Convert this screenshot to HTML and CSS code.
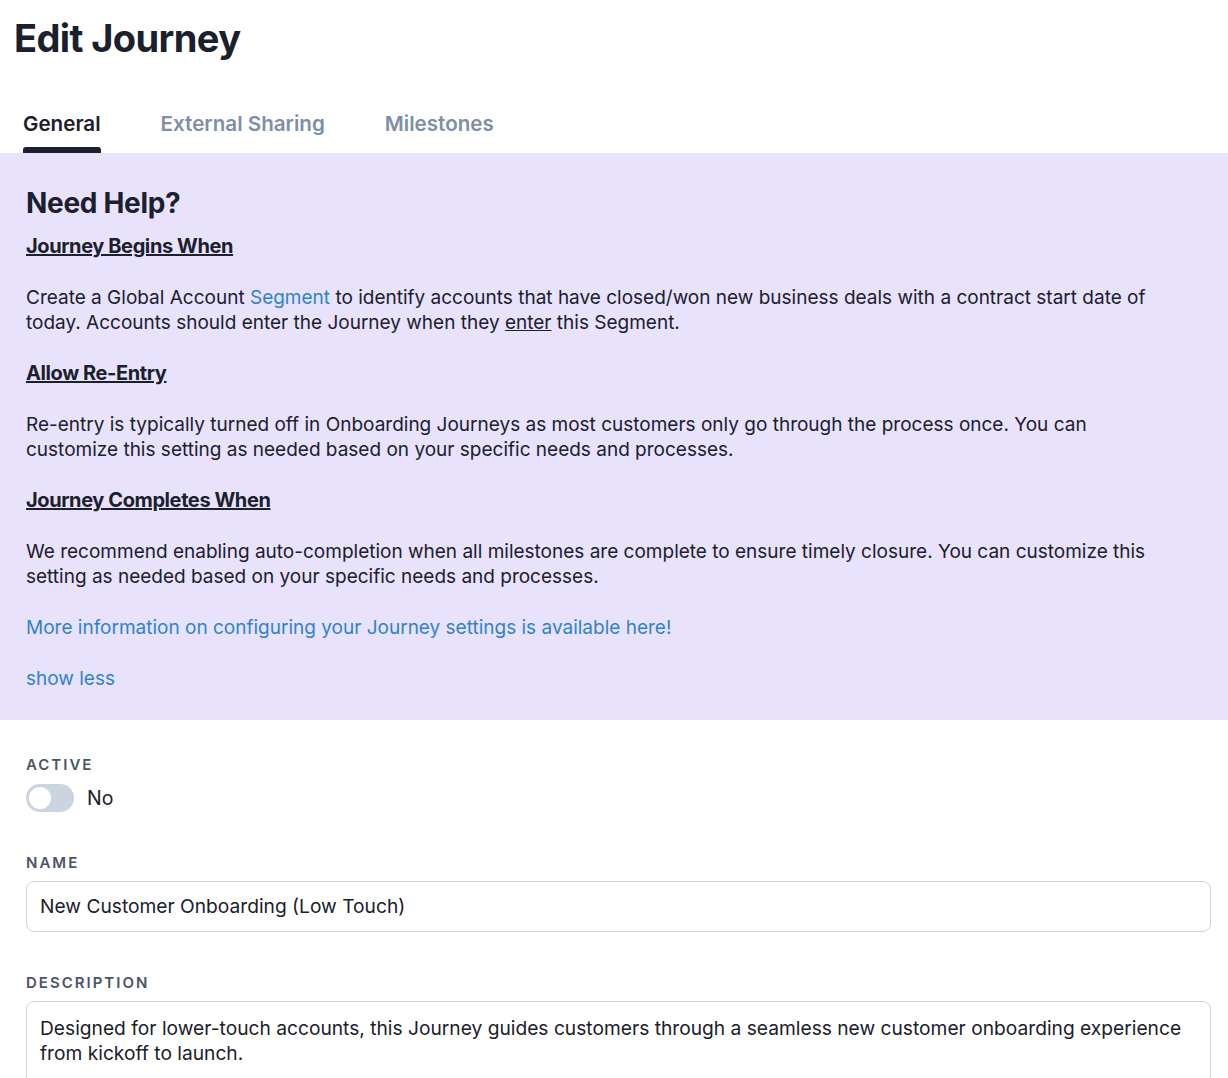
FILE: index.html
```html
<!DOCTYPE html>
<html lang="en">
<head>
    <meta charset="UTF-8">
    <title>Edit Journey</title>
    <link rel="stylesheet" href="styles.css">
</head>
<body>
<h1 class="page-title">Edit Journey</h1>

<ul class="tabs">
    <li class="tab active"><span class="tab-text">General</span><em class="tab-bar"></em></li>
    <li class="tab"><span class="tab-text">External Sharing</span><em class="tab-bar"></em></li>
    <li class="tab"><span class="tab-text">Milestones</span><em class="tab-bar"></em></li>
</ul>

<div class="help">
    <h2 class="help-title">Need Help?</h2>
    <h3 class="help-head">Journey Begins When</h3>
    <p class="help-text">Create a Global Account <a class="link" href="#">Segment</a> to identify accounts that have closed/won new business deals with a contract start date of today. Accounts should enter the Journey when they <u>enter</u> this Segment.</p>
    <h3 class="help-head">Allow Re-Entry</h3>
    <p class="help-text">Re-entry is typically turned off in Onboarding Journeys as most customers only go through the process once. You can customize this setting as needed based on your specific needs and processes.</p>
    <h3 class="help-head">Journey Completes When</h3>
    <p class="help-text">We recommend enabling auto-completion when all milestones are complete to ensure timely closure. You can customize this setting as needed based on your specific needs and processes.</p>
    <p class="help-text"><a class="link" href="#">More information on configuring your Journey settings is available here!</a></p>
    <p class="help-text"><a class="link" href="#">show less</a></p>
</div>

<form class="form">
    <div class="field">
        <label class="label">Active</label>
        <div class="switch-row">
            <span class="switch"><span class="knob"></span></span>
            <span class="switch-text">No</span>
        </div>
    </div>
    <div class="field">
        <label class="label">Name</label>
        <div class="input">New Customer Onboarding (Low Touch)</div>
    </div>
    <div class="field">
        <label class="label">Description</label>
        <div class="input textarea">Designed for lower-touch accounts, this Journey guides customers through a seamless new customer onboarding experience from kickoff to launch.</div>
    </div>
</form>
</body>
</html>
```

FILE: styles.css
```css
* {
    margin: 0;
    padding: 0;
    list-style: none;
    box-sizing: border-box;
}

body {
    font-family: Inter, "Liberation Sans", sans-serif;
    color: #1a202c;
    background: #fff;
}

.page-title {
    padding: 15px 14px 0;
    font-size: 38px;
    line-height: 46px;
    font-weight: 700;
    letter-spacing: -0.6px;
}

.tabs {
    display: flex;
    gap: 60px;
    padding: 51px 0 0 23px;
}

.tab {
    display: flex;
    flex-direction: column;
    font-size: 20.6px;
    line-height: 24px;
    font-weight: 600;
    color: #7d8fa7;
}

.tab.active {
    color: #1a202c;
}

.tab-bar {
    display: block;
    height: 6px;
    margin-top: 11px;
    border-radius: 3px 3px 0 0;
}

.tab.active .tab-bar {
    background: #1a202c;
}

.help {
    background: #e8e2fc;
    padding: 33px 58px 29px 26px;
}

.help-title {
    font-size: 28px;
    line-height: 34px;
    font-weight: 700;
    letter-spacing: -0.3px;
}

.help-head {
    margin-top: 14px;
    font-size: 20px;
    line-height: 25px;
    font-weight: 700;
    text-decoration: underline;
    letter-spacing: -0.4px;
}

.help-text + .help-head {
    margin-top: 26px;
}

.help-text {
    margin-top: 26px;
    font-size: 19px;
    line-height: 25px;
}

.link {
    color: #3182ce;
    text-decoration: none;
}

.form {
    padding: 35px 17px 0 26px;
}

.field + .field {
    margin-top: 41px;
}

.label {
    display: block;
    font-size: 15px;
    line-height: 20px;
    font-weight: 600;
    letter-spacing: 2px;
    text-transform: uppercase;
    color: #4a5568;
}

.switch-row {
    display: flex;
    align-items: center;
    gap: 13px;
    margin-top: 9px;
}

.switch {
    display: flex;
    align-items: center;
    width: 48px;
    height: 28px;
    padding: 0 3px;
    border-radius: 14px;
    background: #cbd5e0;
}

.knob {
    width: 22px;
    height: 22px;
    border-radius: 50%;
    background: #fff;
}

.switch-text {
    font-size: 19.5px;
    line-height: 25px;
}

.input {
    margin-top: 8px;
    height: 51px;
    padding: 12px 13px;
    border: 1px solid #cbd5e0;
    border-radius: 8px;
    font-size: 19.2px;
    line-height: 25px;
}

.textarea {
    height: 120px;
    padding-top: 14px;
}
```
